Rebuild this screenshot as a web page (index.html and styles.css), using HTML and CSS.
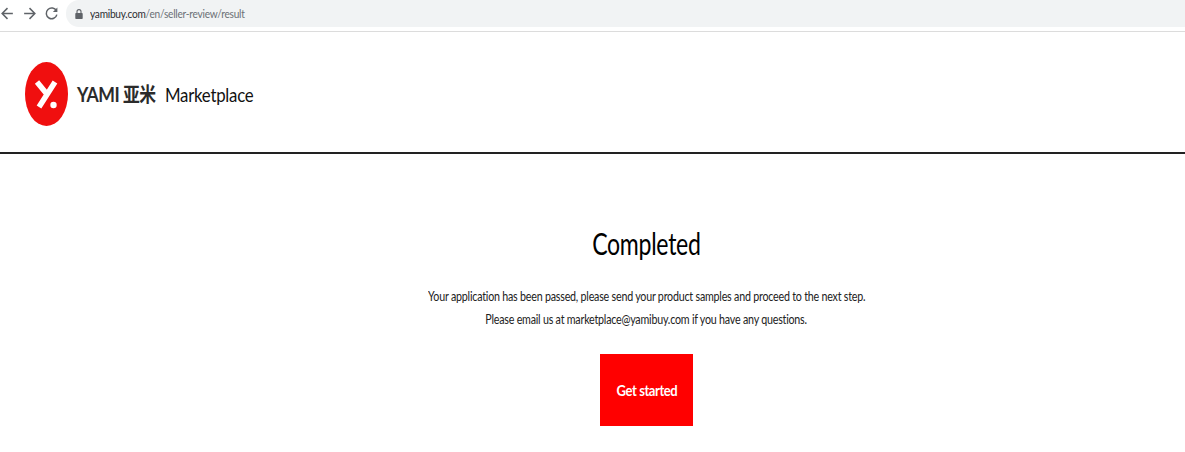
FILE: index.html
```html
<!DOCTYPE html>
<html lang="en">
<head>
    <meta charset="UTF-8">
    <meta name="viewport" content="width=device-width, initial-scale=1.0">
    <title>Completed</title>
    <link rel="stylesheet" href="styles.css">
</head>
<body>
    <div class="toolbar">
        <div class="nav">
            <svg class="nav-icon" viewBox="0 0 14 14"><path d="M12 7H2.500M7 2L2 7l5 5"/></svg>
            <svg class="nav-icon" viewBox="0 0 14 14"><path d="M2 7h9.500M7 2l5 5-5 5"/></svg>
            <svg class="nav-icon" viewBox="0 0 14 14"><path d="M11.600 4.600A5 5 0 1 0 12 8"/><path class="solid" d="M12.500 1.500v4.200H8.300z"/></svg>
        </div>
        <div class="address">
            <svg class="lock" viewBox="0 0 8 10"><path d="M1 4h6a.7.7 0 0 1 .7.7v4.600a.7.7 0 0 1-.7.7H1a.7.7 0 0 1-.7-.7V4.700a.7.7 0 0 1 .7-.7z"/><path class="shackle" d="M2 4V2.600a2 2 0 0 1 4 0V4"/></svg>
            <span class="url"><span class="host">yamibuy.com</span><span class="path">/en/seller-review/result</span></span>
        </div>
    </div>

    <header class="site-header">
        <svg class="logo" viewBox="0 0 43 64">
            <ellipse cx="21.500" cy="32" rx="21.500" ry="32" fill="#f00f0f"/>
            <path d="M12 20l9 11M30 20L14 45" fill="none" stroke="#fff" stroke-width="5.500"/>
            <circle cx="28.500" cy="43" r="3.200" fill="#fff"/>
        </svg>
        <div class="brand-text">
            <span class="brand">YAMI <span class="brand-cn">亚米</span></span>
            <span class="brand-sub">Marketplace</span>
        </div>
    </header>

    <main class="result">
        <h1>Completed</h1>
        <p>Your application has been passed, please send your product samples and proceed to the next step.</p>
        <p>Please email us at marketplace@yamibuy.com if you have any questions.</p>
        <button><span class="btn-label">Get started</span></button>
    </main>
</body>
</html>
```
FILE: styles.css
```css
body {
    font-family: "Lato", "Noto Sans CJK SC", sans-serif;
    background-color: #fff;
    color: #000;
    margin: 0;
    height: 452px;
    overflow: hidden;
}
.toolbar {
    display: flex;
    height: 31px;
    border-bottom: 1px solid #dcdcdc;
}
.nav {
    display: flex;
    gap: 7px;
    width: 66px;
    padding: 6px 0 0 0;
    box-sizing: border-box;
}
.nav-icon {
    width: 15px;
    height: 15px;
    fill: none;
    stroke: #5f6368;
    stroke-width: 1.4;
}
.nav-icon .solid {
    fill: #5f6368;
    stroke: none;
}
.address {
    flex: 1;
    height: 27px;
    display: flex;
    align-items: center;
    padding-left: 9px;
    background-color: #f1f3f4;
    border-radius: 13px 0 0 13px;
    font-size: 12px;
    letter-spacing: -0.3px;
}
.lock {
    width: 8px;
    height: 10px;
    margin-right: 7px;
    fill: #5f6368;
}
.lock .shackle {
    fill: none;
    stroke: #5f6368;
    stroke-width: 1.1;
}
.url {
    transform: scaleX(0.845);
    transform-origin: left center;
    margin-top: -1px;
}
.host {
    color: #2b2d30;
}
.path {
    color: #6b7075;
}
.site-header {
    display: flex;
    align-items: center;
    box-sizing: border-box;
    height: 122px;
    padding: 4px 0 0 25px;
    border-bottom: 2px solid #222;
}
.logo {
    width: 43px;
    height: 64px;
    margin-right: 9px;
}
.brand-text {
    white-space: nowrap;
    margin-top: -2px;
    transform: scaleX(0.84);
    transform-origin: left center;
}
.brand {
    font-size: 21px;
    font-weight: 700;
    color: #2b2b2b;
    letter-spacing: -0.6px;
    margin-right: 7px;
}
.brand-cn {
    font-size: 20px;
}
.brand-sub {
    font-size: 20px;
    color: #111;
    letter-spacing: -0.3px;
}
.result {
    display: flex;
    flex-direction: column;
    align-items: center;
    padding: 71px 0 0 108px;
}
h1 {
    font-size: 30px;
    font-weight: 400;
    line-height: 36px;
    margin: 0 0 24px;
    letter-spacing: -0.4px;
    transform: scaleX(0.77);
}
p {
    font-size: 12.500px;
    line-height: 23px;
    margin: 0;
    color: #222;
    letter-spacing: -0.25px;
    transform: scaleX(0.855);
}
button {
    width: 93px;
    height: 72px;
    margin-top: 23px;
    padding: 0;
    border: none;
    background-color: #f00;
    color: #fff;
    font-family: inherit;
    font-size: 15px;
    font-weight: 700;
    letter-spacing: -0.5px;
}
.btn-label {
    display: inline-block;
    transform: scaleX(0.87);
}
```
